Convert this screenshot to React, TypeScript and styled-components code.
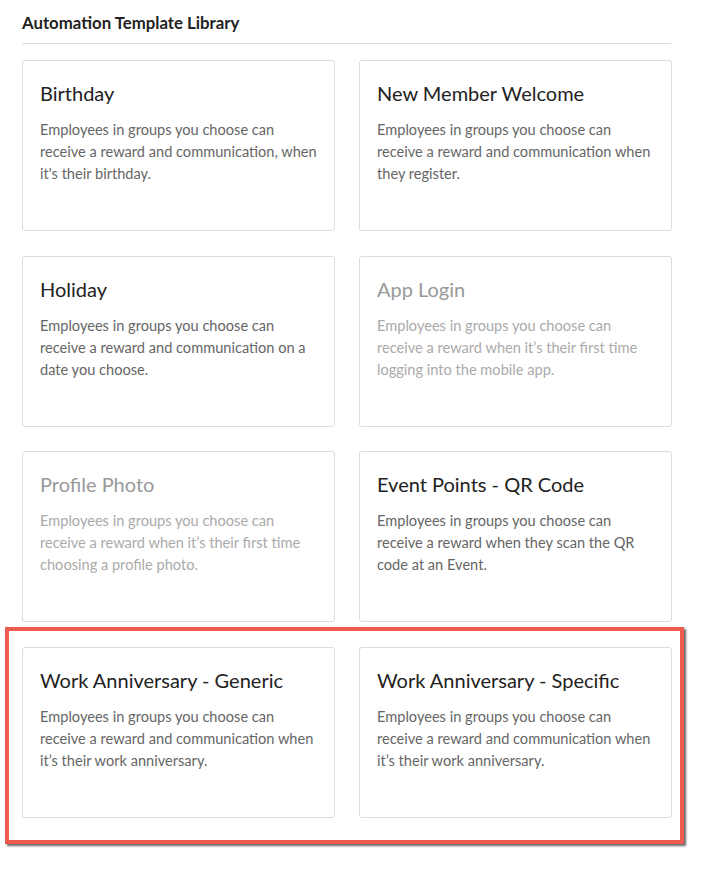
import styled, { createGlobalStyle } from "styled-components";

const templates = [
  {
    title: "Birthday",
    text: "Employees in groups you choose can receive a reward and communication, when it's their birthday.",
  },
  {
    title: "New Member Welcome",
    text: "Employees in groups you choose can receive a reward and communication when they register.",
  },
  {
    title: "Holiday",
    text: "Employees in groups you choose can receive a reward and communication on a date you choose.",
  },
  {
    title: "App Login",
    text: "Employees in groups you choose can receive a reward when it’s their first time logging into the mobile app.",
    muted: true,
  },
  {
    title: "Profile Photo",
    text: "Employees in groups you choose can receive a reward when it’s their first time choosing a profile photo.",
    muted: true,
  },
  {
    title: "Event Points - QR Code",
    text: "Employees in groups you choose can receive a reward when they scan the QR code at an Event.",
  },
  {
    title: "Work Anniversary - Generic",
    text: "Employees in groups you choose can receive a reward and communication when it’s their work anniversary.",
  },
  {
    title: "Work Anniversary - Specific",
    text: "Employees in groups you choose can receive a reward and communication when it’s their work anniversary.",
  },
];

export default function App() {
  return (
    <>
      <GlobalStyle />
      <Page>
        <Heading>Automation Template Library</Heading>
        <Grid>
          {templates.map((t) => (
            <Card key={t.title}>
              <Title $muted={t.muted}>{t.title}</Title>
              <Text $muted={t.muted}>{t.text}</Text>
            </Card>
          ))}
          {/* annotation box round the last row */}
          <Highlight />
        </Grid>
      </Page>
    </>
  );
}

const GlobalStyle = createGlobalStyle`
  body {
    margin: 0;
    background: #fff;
    font-family: "Lato", "Open Sans", sans-serif;
  }
`;

const Page = styled.div`
  width: 649px;
  padding: 12px 0 40px 22px;
`;

const Heading = styled.h2`
  margin: 0;
  padding-bottom: 10px;
  border-bottom: 1px solid #dedede;
  font-size: 16.8px;
  line-height: 21px;
  font-weight: 700;
  color: #222;
`;

const Grid = styled.div`
  position: relative;
  display: grid;
  grid-template-columns: 313px 313px;
  column-gap: 24px;
  row-gap: 24.5px;
  margin-top: 16px;
`;

const Card = styled.div`
  height: 171px;
  box-sizing: border-box;
  padding: 19px 12px 19px 17px;
  border: 1px solid #dcdcdc;
  border-radius: 3px;
  background: #fff;
`;

const Title = styled.div<{ $muted?: boolean }>`
  font-size: 20px;
  line-height: 26px;
  color: ${(p) => (p.$muted ? "#999" : "#222")};
`;

const Text = styled.p<{ $muted?: boolean }>`
  margin: 13px 0 0;
  font-size: 14.6px;
  line-height: 22px;
  color: ${(p) => (p.$muted ? "#aaa" : "#666")};
`;

const Highlight = styled.div`
  position: absolute;
  left: -17px;
  right: -13px;
  bottom: -26px;
  height: 217px;
  box-sizing: border-box;
  border: 4px solid #ee5a4f;
  box-shadow: 2px 2px 2px rgba(50, 50, 50, 0.75);
  pointer-events: none;
`;
